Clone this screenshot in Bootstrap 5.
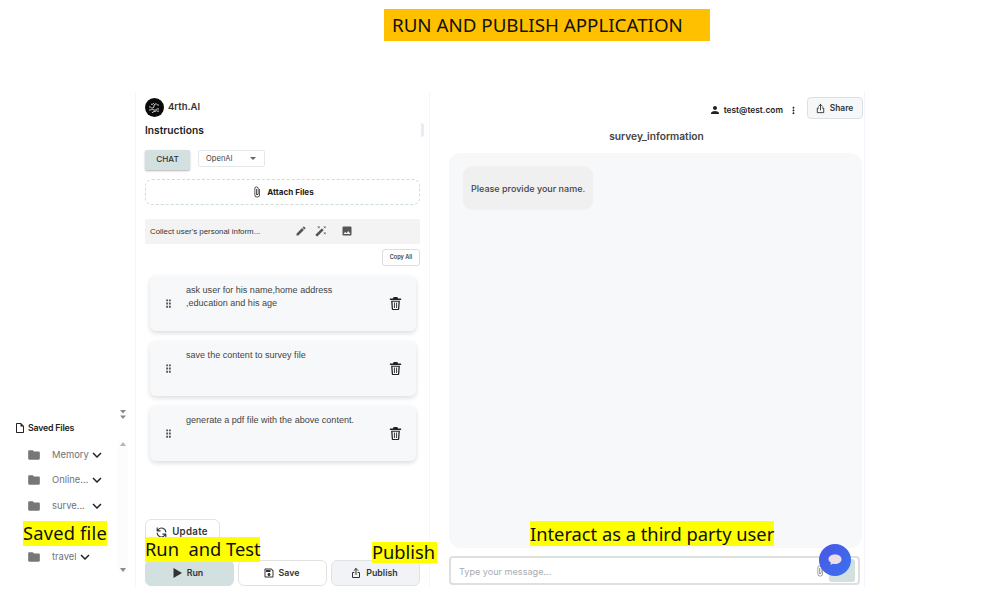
<!DOCTYPE html>
<html lang="en">
<head>
<meta charset="utf-8">
<title>Run and publish application</title>
<link href="https://cdn.jsdelivr.net/npm/bootstrap@5.3.0/dist/css/bootstrap.min.css" rel="stylesheet">
<style>
html,body{margin:0;background:#fff;font-family:"Inter","Liberation Sans",sans-serif;color:#2b2b2b}
.sheet{width:994px;height:597px;overflow:hidden;position:relative}
.banner{margin:9px 0 0 384px;width:326px;height:32px;background:#ffc000;color:#111;font:18.75px/32px "Noto Sans",sans-serif;padding-left:8px}
.desk{margin-top:51px;height:495px}
.ico{display:block;fill:currentColor;flex:none}
.ln{fill:none;stroke:currentColor;stroke-width:2;stroke-linecap:round;stroke-linejoin:round}
.ar-mid{color:#8a8a8a}
.ar-light{color:#b5b5b5}
.tree-col{width:135px;padding-top:318px}
.arrows{width:126px;height:10px;display:flex;justify-content:flex-end}
.saved-head{height:16px;margin:0 0 0 14px;font-size:8.8px;font-weight:600;color:#222;letter-spacing:-.2px}
.saved-head .ico{margin-right:2px}
.tree-body{margin-top:6px;height:131px}
.tree-list{width:118px;padding-left:27px}
.tree-row{height:25.5px;color:#6f7178;font-size:9.4px;font-weight:400}
.tree-row .fold{color:#777;margin-right:11px}
.tree-row .nm{overflow:hidden;white-space:nowrap}
.tree-row .nm-cut{width:37px}
.tree-row .chev{color:#222;margin-left:-1px}
.track{width:10px;background:#fcfcfd;padding:0 0 1px}
.panel{width:295px;padding:6px 9px 1px;border-left:1px solid #f6f6f7;border-right:1px solid #f6f6f7}
.brand{height:19px;font-size:9.5px;font-weight:600;color:#333}
.inst{margin-top:6px;height:14px;font-size:10.2px;font-weight:600;color:#222;line-height:14px}
.nub{width:3px;height:14px;border-radius:0 8px 8px 0;background:#e4ecf7;margin-right:-4px}
.mode-row{margin-top:13px;height:20px}
.btn.chat-btn{width:45px;height:20px;padding:0 0 2px;background:#d2e0df;border:0;border-radius:2px;box-shadow:0 1px 2px rgba(0,0,0,.3);font-size:8.2px;color:#333;font-weight:500}
.model{width:67px;height:17px;margin-left:8px;border:1px solid #e3e9e9;border-radius:2px;font-size:7.6px;color:#444;padding:0 8px 0 7px}
.caret-down{width:0;height:0;border:3px solid transparent;border-top:3px solid #666;border-bottom:0}
.attach{margin-top:9px;height:26px;border:1px dashed #cfdcdc;border-radius:7px;font-size:8.1px;font-weight:700;color:#222}
.prompt{margin-top:14px;height:25px;background:#f3f3f4;border-radius:2px;padding:0 0 1px 5px;font:7.9px "Liberation Sans",sans-serif;color:#333}
.prompt .ttl{width:145px}
.prompt .ico{color:#555}
.prompt .pic{margin-left:14px}
.btn.copy{margin:5px 0 0 auto;display:block;width:38px;height:17px;padding:0;border:1px solid #ddd;border-radius:3px;background:#fff;font-size:5.6px;font-weight:600;color:#444;line-height:15px}
.step{margin:0 4px 0 5px;height:55px;background:#f7f8fa;border:0;border-radius:6px;box-shadow:0 2px 5px rgba(0,0,0,.14);flex-direction:row;font:9.05px/13px "Liberation Sans",sans-serif;color:#444}
.step+.step{margin-top:10px}
.steps{margin-top:10px}
.grip{color:#555;margin:-1px 0 0 13px}
.step-txt{width:185px;margin-left:12px;padding-top:8px}
.step .bin{color:#222;margin:-1px 0 0 17px}
.btn.upd{width:75px;height:28px;padding:0 2px 2px 0;margin-top:auto;border:1px solid #e1e4e4;border-radius:6px;background:#fff;font-size:9.7px;letter-spacing:.3px;font-weight:600;color:#333;gap:4px}
.acts{margin-top:13px;height:26px}
.btn.act{height:26px;width:89px;padding:0;border-radius:6px;font-size:8.8px;font-weight:600;color:#333;border:1px solid #e1e3e3;background:#fff;gap:4px}
.btn.act.go{background:#d2e0df;border-color:#d2e0df}
.btn.act.pub{background:#f2f3f6}
.btn.act.nudge{padding-right:3px}
.go-in{margin-left:-5px}
.chat-col{width:428px;margin-left:7px;border-right:1px solid #f2f4fb}
.top{height:32px;padding:5px 1px 0 0;font-size:8.4px;font-weight:600;color:#222}
.btn.share{width:56px;height:22px;padding:0 2px 0 0;margin-left:8px;border:1px solid #dcdfe3;border-radius:4px;background:#f6f7f9;font-size:8.4px;font-weight:600;color:#333}
.who{color:#222;margin-top:7px;gap:3px}
.who span{margin-right:2px}
.conv-title{margin-top:5px;height:14px;line-height:14px;font-size:10.2px;font-weight:600;color:#444;text-align:center;padding-left:12px}
.log{margin:10px 2px 0 12px;height:395px;background:#f7f8fa;border-radius:12px;padding:13px 14px}
.bubble{width:130px;height:44px;background:#f0f0f0;border-radius:9px;font-size:9px;font-weight:500;color:#444;padding:1px 0 0 8px}
.composer{margin:8px 4px 0 12px;height:29px;border:2px solid #dedfe0;border-radius:4px;padding:0 3px 0 8px;background:#fff;font-size:9.1px;color:#a9acb2}
.composer>span:first-child{padding-top:2px}
.composer .clip{color:#888;margin-left:auto;margin-right:3px}
.send{width:26px;height:23px;background:#d2e0df;border-radius:3px}
.fab{position:absolute;left:819px;top:544px;width:32px;height:32px;border-radius:50%;background:linear-gradient(135deg,#4a55e4,#3a73f0)}
.tag{position:absolute;background:#ff0;color:#111;font:18.3px/23px "Noto Sans",sans-serif;white-space:nowrap;height:25px}
.tag-saved{left:23px;top:521px;width:84px;letter-spacing:.2px}
.tag-run{left:145px;top:537px;width:115px}
.tag-pub{left:372px;top:542px;width:65px;height:21px;line-height:19px}
.tag-third{left:530px;top:521px;width:244px;line-height:25px}
</style>
</head>
<body>
<svg width="0" height="0" class="position-absolute">
<defs>
<symbol id="i-folder" viewBox="0 0 24 24"><path d="M10 4H4c-1.100 0-1.990.9-1.990 2L2 18c0 1.100.9 2 2 2h16c1.100 0 2-.9 2-2V8c0-1.100-.9-2-2-2h-8l-2-2z"/></symbol>
<symbol id="i-chev" viewBox="0 0 24 24"><path d="M16.590 8.590 12 13.170 7.410 8.590 6 10l6 6 6-6z"/></symbol>
<symbol id="i-file" viewBox="0 0 24 24"><path d="M14 2H6c-1.100 0-1.990.9-1.990 2L4 20c0 1.100.89 2 1.990 2H18c1.100 0 2-.9 2-2V8l-6-6zM6 20V4h7v5h5v11H6z"/></symbol>
<symbol id="i-grip" viewBox="0 0 24 24"><path d="M7 3h4v4H7zM13 3h4v4h-4zM7 10h4v4H7zM13 10h4v4h-4zM7 17h4v4H7zM13 17h4v4h-4z"/></symbol>
<symbol id="i-bin" viewBox="0 0 24 24"><path d="M9 1.500h6l1 2.500h5v2.200H3V4h5zM5 7.500h14l-1 13.200c-.1 1-1 1.800-2 1.800H8c-1 0-1.900-.8-2-1.800zm2.200 1.800.8 11.300h8l.8-11.300zM9.500 10.500h1.400v8.500H9.500zM13.100 10.500h1.400v8.500h-1.400z" fill-rule="evenodd"/></symbol>
<symbol id="i-edit" viewBox="0 0 24 24"><path d="M3 17.250V21h3.750L17.810 9.940l-3.750-3.750L3 17.250zM20.710 7.040c.39-.39.39-1.020 0-1.410l-2.340-2.340c-.39-.39-1.020-.39-1.410 0l-1.830 1.830 3.750 3.750 1.830-1.830z"/></symbol>
<symbol id="i-wand" viewBox="0 0 24 24"><path d="M7.500 5.600 10 7 8.600 4.500 10 2 7.500 3.400 5 2l1.400 2.500L5 7zm12 9.800L17 14l1.400 2.500L17 19l2.500-1.400L22 19l-1.400-2.500L22 14zM22 2l-2.500 1.400L17 2l1.400 2.500L17 7l2.500-1.400L22 7l-1.400-2.500zm-7.630 5.290a.996.996 0 0 0-1.410 0L1.290 18.960a.996.996 0 0 0 0 1.410l2.340 2.340c.39.39 1.020.39 1.410 0L16.700 11.050a.996.996 0 0 0 0-1.410l-2.330-2.350z"/></symbol>
<symbol id="i-image" viewBox="0 0 24 24"><path d="M21 19V5c0-1.100-.9-2-2-2H5c-1.100 0-2 .9-2 2v14c0 1.100.9 2 2 2h14c1.100 0 2-.9 2-2zM8.500 13.500l2.500 3.010L14.500 12l4.500 6H5l3.500-4.500z"/></symbol>
<symbol id="i-clip" viewBox="0 0 24 24"><path d="M16.500 6v11.500c0 2.210-1.790 4-4 4s-4-1.790-4-4V5c0-1.380 1.120-2.500 2.500-2.500s2.500 1.120 2.500 2.500v10.500c0 .55-.45 1-1 1s-1-.45-1-1V6H10v9.500c0 1.380 1.120 2.500 2.500 2.500s2.500-1.120 2.500-2.500V5c0-2.210-1.790-4-4-4S7 2.790 7 5v12.500c0 3.040 2.460 5.500 5.500 5.500s5.500-2.460 5.500-5.500V6h-1.500z"/></symbol>
<symbol id="i-person" viewBox="0 0 24 24"><path d="M12 12c2.210 0 4-1.790 4-4s-1.790-4-4-4-4 1.790-4 4 1.790 4 4 4zm0 2c-2.670 0-8 1.340-8 4v2h16v-2c0-2.660-5.330-4-8-4z"/></symbol>
<symbol id="i-more" viewBox="0 0 24 24"><path d="M12 8c1.100 0 2-.9 2-2s-.9-2-2-2-2 .9-2 2 .9 2 2 2zm0 2c-1.100 0-2 .9-2 2s.9 2 2 2 2-.9 2-2-.9-2-2-2zm0 6c-1.100 0-2 .9-2 2s.9 2 2 2 2-.9 2-2-.9-2-2-2z"/></symbol>
<symbol id="i-play" viewBox="0 0 24 24"><path d="M5 2v20l17-10z"/></symbol>
<symbol id="i-save" viewBox="0 0 24 24"><path d="M17 3H5c-1.110 0-2 .9-2 2v14c0 1.100.89 2 2 2h14c1.100 0 2-.9 2-2V7l-4-4zm2 16H5V5h11.170L19 7.830V19zm-7-7c-1.660 0-3 1.340-3 3s1.340 3 3 3 3-1.340 3-3-1.340-3-3-3zM6 6h9v4H6z"/></symbol>
<symbol id="i-up" viewBox="0 0 24 24"><path class="ln" d="M12 15V3M8 7l4-4 4 4M8 11H5v10h14V11h-3"/></symbol>
<symbol id="i-sync" viewBox="0 0 24 24"><path class="ln" d="M20 11a8 8 0 0 0-14-4.500L4 9M4 3.500V9h5.500M4 13a8 8 0 0 0 14 4.500l2-2.500M20 20.500V15h-5.500"/></symbol>
</defs>
</svg>

<div class="sheet">
  <div class="banner">RUN AND PUBLISH APPLICATION</div>

  <div class="desk d-flex">
    <aside class="tree-col">
      <div class="arrows">
        <svg class="ico ar-mid" width="6" height="10" viewBox="0 0 6 10"><path d="M0 0h6L3 3.500zM0 5.500h6L3 9z"/></svg>
      </div>
      <div class="saved-head d-flex align-items-center">
        <svg class="ico" width="12" height="12"><use href="#i-file"/></svg><span>Saved Files</span>
      </div>
      <div class="tree-body d-flex">
        <div class="tree-list">
          <div class="tree-row d-flex align-items-center"><svg class="ico fold" width="14" height="14"><use href="#i-folder"/></svg><span class="nm">Memory</span><svg class="ico chev" width="18" height="18"><use href="#i-chev"/></svg></div>
          <div class="tree-row d-flex align-items-center"><svg class="ico fold" width="14" height="14"><use href="#i-folder"/></svg><span class="nm nm-cut">Online...</span><svg class="ico chev" width="18" height="18"><use href="#i-chev"/></svg></div>
          <div class="tree-row d-flex align-items-center"><svg class="ico fold" width="14" height="14"><use href="#i-folder"/></svg><span class="nm nm-cut">surve...</span><svg class="ico chev" width="18" height="18"><use href="#i-chev"/></svg></div>
          <div class="tree-row d-flex align-items-center"><svg class="ico fold" width="14" height="14"><use href="#i-folder"/></svg><svg class="ico chev" width="18" height="18"><use href="#i-chev"/></svg></div>
          <div class="tree-row d-flex align-items-center"><svg class="ico fold" width="14" height="14"><use href="#i-folder"/></svg><span class="nm">travel</span><svg class="ico chev" width="18" height="18"><use href="#i-chev"/></svg></div>
        </div>
        <div class="track d-flex flex-column justify-content-between align-items-center">
          <svg class="ico ar-light" width="6" height="4" viewBox="0 0 6 4"><path d="M3 0l3 4H0z"/></svg>
          <svg class="ico ar-mid" width="6" height="4" viewBox="0 0 6 4"><path d="M0 0h6L3 4z"/></svg>
        </div>
      </div>
    </aside>

    <section class="panel d-flex flex-column">
      <div class="brand d-flex align-items-center gap-1">
        <svg class="ico" width="19" height="19" viewBox="0 0 19 19"><circle cx="9.500" cy="9.500" r="9.500" fill="#0a0a0a"/><path d="M4 9c2-1 2 2 4 1s0-3 2-4 2 2 4 1M4 12c2 0 3-1 5 0s2-2 5-1M7 15c1-2 3-1 4-2s1 1 3 0M6 6c1 1 2 0 3-1" fill="none" stroke="#e2e2e2" stroke-width=".9"/></svg>
        <span>4rth.AI</span>
      </div>
      <div class="inst d-flex justify-content-between"><span>Instructions</span><span class="nub"></span></div>
      <div class="mode-row d-flex align-items-start">
        <button type="button" class="btn chat-btn">CHAT</button>
        <div class="model d-flex align-items-center justify-content-between"><span>OpenAI</span><span class="caret-down"></span></div>
      </div>
      <div class="attach d-flex align-items-center justify-content-center gap-1">
        <svg class="ico" width="12" height="12"><use href="#i-clip"/></svg><span>Attach Files</span>
      </div>
      <div class="prompt d-flex align-items-center">
        <span class="ttl">Collect user's personal inform...</span>
        <svg class="ico" width="12" height="12"><use href="#i-edit"/></svg>
        <svg class="ico ms-2" width="12" height="12"><use href="#i-wand"/></svg>
        <svg class="ico pic" width="12" height="12"><use href="#i-image"/></svg>
      </div>
      <button type="button" class="btn copy">Copy All</button>
      <div class="steps">
        <div class="card step d-flex align-items-center">
          <svg class="ico grip" width="11" height="11"><use href="#i-grip"/></svg>
          <div class="step-txt align-self-start">ask user for his name,home address ,education and his age</div>
          <svg class="ico bin" width="15" height="15"><use href="#i-bin"/></svg>
        </div>
        <div class="card step d-flex align-items-center">
          <svg class="ico grip" width="11" height="11"><use href="#i-grip"/></svg>
          <div class="step-txt align-self-start">save the content to survey file</div>
          <svg class="ico bin" width="15" height="15"><use href="#i-bin"/></svg>
        </div>
        <div class="card step d-flex align-items-center">
          <svg class="ico grip" width="11" height="11"><use href="#i-grip"/></svg>
          <div class="step-txt align-self-start">generate a pdf file with the above content.</div>
          <svg class="ico bin" width="15" height="15"><use href="#i-bin"/></svg>
        </div>
      </div>
      <button type="button" class="btn upd d-flex align-items-center justify-content-center">
        <svg class="ico" width="13" height="13"><use href="#i-sync"/></svg>Update
      </button>
      <div class="acts d-flex gap-1">
        <button type="button" class="btn act go d-flex align-items-center justify-content-center"><svg class="ico go-in" width="12" height="12"><use href="#i-play"/></svg>Run</button>
        <button type="button" class="btn act nudge d-flex align-items-center justify-content-center"><svg class="ico" width="12" height="12"><use href="#i-save"/></svg>Save</button>
        <button type="button" class="btn act pub nudge d-flex align-items-center justify-content-center"><svg class="ico" width="12" height="12"><use href="#i-up"/></svg>Publish</button>
      </div>
    </section>

    <section class="chat-col d-flex flex-column">
      <div class="top d-flex align-items-start justify-content-end">
        <div class="who d-flex align-items-center"><svg class="ico" width="12" height="12"><use href="#i-person"/></svg><span>test@test.com</span><svg class="ico" width="11" height="11"><use href="#i-more"/></svg></div>
        <button type="button" class="btn share d-flex align-items-center justify-content-center gap-1"><svg class="ico" width="11" height="11"><use href="#i-up"/></svg>Share</button>
      </div>
      <div class="conv-title">survey_information</div>
      <div class="log">
        <div class="bubble d-flex align-items-center">Please provide your name.</div>
      </div>
      <div class="composer d-flex align-items-center">
        <span>Type your message...</span>
        <svg class="ico clip" width="12" height="14"><use href="#i-clip"/></svg>
        <span class="send"></span>
      </div>
    </section>
  </div>

  <div class="fab d-flex align-items-center justify-content-center">
    <svg class="ico" width="16" height="14" viewBox="0 0 16 14"><path d="M8 1.500c3.600 0 6.500 1.800 6.500 4.700S11.600 11 8 11c-.8 0-1.500-.1-2.200-.3L3.500 12l.3-2.600C2.400 8.600 1.500 7.500 1.500 6.200 1.500 3.300 4.400 1.500 8 1.500z" fill="#ecdfe6"/></svg>
  </div>
  <div class="tag tag-saved">Saved file</div>
  <div class="tag tag-run">Run&nbsp; and Test</div>
  <div class="tag tag-pub">Publish</div>
  <div class="tag tag-third">Interact as a third party user</div>
</div>
<script src="https://cdn.jsdelivr.net/npm/bootstrap@5.3.0/dist/js/bootstrap.bundle.min.js"></script>
</body>
</html>
